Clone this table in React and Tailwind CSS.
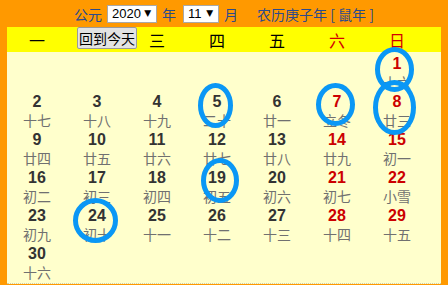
import React from 'react';

const WEEK = ['一', '二', '三', '四', '五', '六', '日'];

// [day, lunar label, red?]
const CELLS = [
  null, null, null, null, null, null, [1, '十六', true],
  [2, '十七'], [3, '十八'], [4, '十九'], [5, '二十'], [6, '廿一'], [7, '立冬', true], [8, '廿三', true],
  [9, '廿四'], [10, '廿五'], [11, '廿六'], [12, '廿七'], [13, '廿八'], [14, '廿九', true], [15, '初一', true],
  [16, '初二'], [17, '初三'], [18, '初四'], [19, '初五'], [20, '初六'], [21, '初七', true], [22, '小雪', true],
  [23, '初九'], [24, '初十'], [25, '十一'], [26, '十二'], [27, '十三'], [28, '十四', true], [29, '十五', true],
  [30, '十六'],
];

// hand-drawn marker circles: cx, cy, rx, ry
const MARKS = [
  [394.5, 69.5, 17, 20],
  [394.5, 107.5, 19, 25],
  [335.5, 104.5, 17, 19],
  [215.5, 105.5, 15, 20],
  [220, 180.5, 16.5, 20],
  [95.5, 220.5, 20, 20],
];

const Picker = ({ value, wide }) => (
  <div
    className={`h-[18px] ${wide ? 'w-[50px]' : 'w-[36px]'} bg-white border border-[#a8a8a8] flex items-center pl-[4px] pr-[5px] text-[13px] text-black font-['Liberation_Sans',sans-serif] leading-none`}
  >
    <span>{value}</span>
    <span className="ml-auto text-[9px] font-['DejaVu_Sans',sans-serif]">▼</span>
  </div>
);

export default function App() {
  return (
    <div className="relative w-[448px] h-[285px] bg-[#ff9900] overflow-hidden font-['Noto_Sans_CJK_SC',sans-serif]">
      {/* Year / month bar */}
      <div className="h-[27px] flex items-center justify-center text-[14px] text-[#2b4a8c] leading-none">
        <span>公元</span>
        <div className="ml-[5px]"><Picker value="2020" wide /></div>
        <span className="ml-[5px]">年</span>
        <div className="ml-[7px]"><Picker value="11" /></div>
        <span className="ml-[5px]">月</span>
        <span className="ml-[19px]">农历庚子年 [ 鼠年 ]</span>
      </div>

      <div className="mx-[7px] w-[434px]">
        {/* Weekday header */}
        <div className="h-[25px] bg-[#ffff00] grid grid-cols-[repeat(7,60px)] items-center text-[16px] leading-none">
          {WEEK.map((w, i) =>
            i === 1 ? (
              <div key={w} className="relative h-[25px]">
                <button className="absolute left-[10px] top-0 w-[60px] h-[22px] bg-[#e3e3e3] border border-[#9a9a9a] rounded-[2px] text-[14px] text-black leading-none px-0 whitespace-nowrap">
                  回到今天
                </button>
              </div>
            ) : (
              <div key={w} className={`text-center ${i >= 5 ? 'text-[#d40000]' : 'text-black'}`}>
                {w}
              </div>
            )
          )}
        </div>

        {/* Days */}
        <div className="h-[232px] bg-[#ffffcc] border-b border-dotted border-[#cfcfb0] pt-[2px]">
          <div className="grid grid-cols-[repeat(7,60px)]">
            {CELLS.map((c, i) =>
              c ? (
                <div key={i} className="h-[38px] flex flex-col items-center">
                  <div
                    className={`h-[19px] leading-[19px] text-[16px] font-bold font-['Liberation_Sans',sans-serif] ${
                      c[2] ? 'text-[#cc0000]' : 'text-[#333333]'
                    }`}
                  >
                    {c[0]}
                  </div>
                  <div className="h-[19px] leading-[19px] text-[14px] text-[#707070]">{c[1]}</div>
                </div>
              ) : (
                <div key={i} className="h-[38px]" />
              )
            )}
          </div>
        </div>
      </div>

      {/* Marker overlay */}
      <svg className="absolute inset-0 pointer-events-none" width="448" height="285">
        {MARKS.map(([cx, cy, rx, ry], i) => (
          <ellipse key={i} cx={cx} cy={cy} rx={rx} ry={ry} fill="none" stroke="#0a97f5" strokeWidth="5" />
        ))}
      </svg>
    </div>
  );
}
